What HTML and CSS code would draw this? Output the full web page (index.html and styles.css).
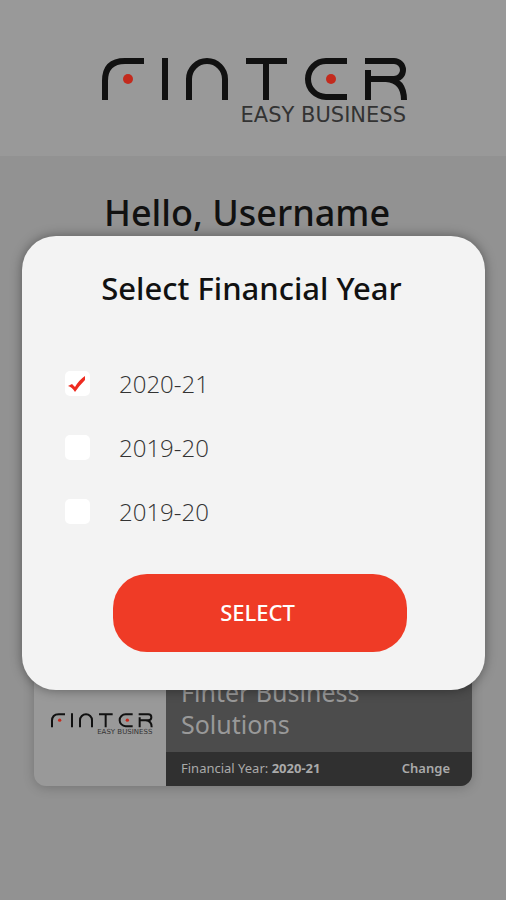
FILE: index.html
```html
<!DOCTYPE html>
<html lang="en">
<head>
<meta charset="utf-8">
<meta name="viewport" content="width=device-width, initial-scale=1">
<title>Finter Easy Business</title>
<link rel="stylesheet" href="styles.css">
</head>
<body>
<div class="page">
  <header class="header">
    <svg class="logo" viewBox="0 0 306 68" role="img" aria-label="Finter Easy Business">
      <g id="finter-mark">
        <g fill="none" stroke="#111" stroke-width="6">
          <path d="M3 42V23Q3 3 23 3H42M63 0V42M87 42V21A18 18 0 0 1 123 21V42M144 3H185M164 3V42M245 3H224A18 18 0 0 0 224 39H245M263 3H292A9 9 0 0 1 292 21H266M266 12V42M284 21Q302 22 302 42"/>
        </g>
        <circle cx="26" cy="21" r="5" fill="#c32a1d"/>
        <circle cx="229" cy="21" r="5" fill="#c32a1d"/>
        <text class="tagline" x="304" y="64" text-anchor="end">EASY BUSINESS</text>
      </g>
    </svg>
  </header>
  <main class="content">
    <h1 class="greeting">Hello, Username</h1>
    <article class="company">
      <div class="company-logo">
        <svg class="small-logo" viewBox="0 0 306 68" aria-hidden="true"><use href="#finter-mark"/></svg>
      </div>
      <div class="company-info">
        <h2 class="company-name">Finter Business Solutions</h2>
        <div class="company-year">
          <span>Financial Year: <strong>2020-21</strong></span>
          <a class="change" href="#year-dialog">Change</a>
        </div>
      </div>
    </article>
  </main>
  <div class="overlay">
    <form class="dialog" id="year-dialog" role="dialog" aria-labelledby="dialog-title">
      <h2 class="dialog-title" id="dialog-title">Select Financial Year</h2>
      <div class="years">
        <label class="year"><span class="box"><input type="checkbox" checked><svg class="tick" viewBox="0 0 18 18" aria-hidden="true"><path d="M0 11L4 9L7 12Q11 5 17 1V5Q11 11 7 17Q4 12 0 11Z"/></svg></span>2020-21</label>
        <label class="year"><span class="box"><input type="checkbox"></span>2019-20</label>
        <label class="year"><span class="box"><input type="checkbox"></span>2019-20</label>
      </div>
      <button class="select" type="button">SELECT</button>
    </form>
  </div>
</div>
</body>
</html>
```
FILE: styles.css
```css
* {
  box-sizing: border-box;
}

body {
  margin: 0;
  background: #929292;
  color: #111;
  font-family: "Noto Sans", "Open Sans", sans-serif;
}

h1,
h2 {
  margin: 0;
}

.page {
  position: relative;
  display: flex;
  flex-direction: column;
  min-height: 100vh;
}

.header {
  display: flex;
  justify-content: center;
  padding: 58px 0 30px 4px;
  background: #999;
}

.logo {
  width: 306px;
  height: 68px;
}

.tagline {
  fill: #333;
  font-family: "DejaVu Sans", sans-serif;
  font-size: 21px;
}

.content {
  display: flex;
  flex: 1;
  flex-direction: column;
  justify-content: space-between;
  padding: 33px 34px 114px;
}

.greeting {
  padding-right: 12px;
  font-size: 36px;
  font-weight: 500;
  line-height: 48px;
  text-align: center;
}

.company {
  display: flex;
  overflow: hidden;
  min-height: 132px;
  border-radius: 12px;
  background: #999;
  box-shadow: 0 2px 12px rgba(0, 0, 0, 0.2);
}

.company-logo {
  display: flex;
  align-items: center;
  justify-content: center;
  width: 132px;
  padding: 8px 0 0 4px;
}

.small-logo {
  width: 102px;
  height: 23px;
}

.company-info {
  display: flex;
  flex: 1;
  flex-direction: column;
  background: #4c4c4c;
  color: #aaa;
}

.company-name {
  flex: 1;
  max-width: 240px;
  padding: 22px 15px 0;
  color: #999;
  font-size: 25px;
  font-weight: 400;
  line-height: 32px;
}

.company-year {
  display: flex;
  justify-content: space-between;
  padding: 6px 22px 8px 15px;
  background: #303030;
  font-size: 13px;
  line-height: 20px;
}

.change {
  color: inherit;
  font-weight: 600;
  text-decoration: none;
}

.overlay {
  position: absolute;
  inset: 0;
  display: flex;
  align-items: center;
  padding: 25px 21px 0 22px;
}

.dialog {
  display: flex;
  flex: 1;
  flex-direction: column;
  align-items: center;
  padding: 32px 40px 38px;
  border-radius: 34px;
  background: #f3f3f3;
  box-shadow: 0 0 12px rgba(0, 0, 0, 0.4);
}

.dialog-title {
  padding-right: 4px;
  font-size: 31px;
  font-weight: 500;
  line-height: 40px;
}

.years {
  display: flex;
  flex-direction: column;
  gap: 32px;
  align-self: stretch;
  margin: 60px 0 46px;
}

.year {
  display: flex;
  align-items: center;
  gap: 27px;
  color: #333;
  font-family: "Open Sans", "Noto Sans", sans-serif;
  font-size: 24px;
  font-weight: 300;
  line-height: 32px;
}

.box {
  display: grid;
  place-items: center;
  width: 30px;
  height: 26px;
}

.box > * {
  grid-area: 1 / 1;
}

.box input {
  width: 25px;
  height: 25px;
  margin: 0;
  border-radius: 5px;
  background: #fff;
  appearance: none;
}

.tick {
  width: 18px;
  height: 18px;
  fill: #ee2b20;
  pointer-events: none;
}

.select {
  width: 294px;
  max-width: 100%;
  height: 78px;
  margin-left: 12px;
  padding: 0 4px 2px 0;
  border: 0;
  border-radius: 34px;
  background: #ef3b26;
  color: #fff;
  font-family: inherit;
  font-size: 22px;
  font-weight: 500;
}
```
